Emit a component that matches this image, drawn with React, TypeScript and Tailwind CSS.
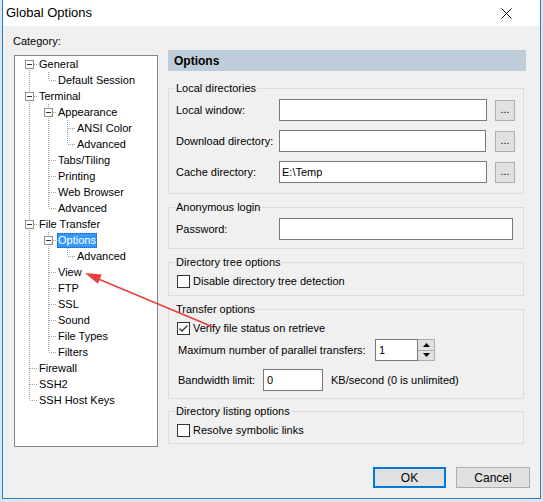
import React from 'react';

type Node = { label: string; level: number; box?: boolean; selected?: boolean };

const tree: Node[] = [
  { label: 'General', level: 0, box: true },
  { label: 'Default Session', level: 1 },
  { label: 'Terminal', level: 0, box: true },
  { label: 'Appearance', level: 1, box: true },
  { label: 'ANSI Color', level: 2 },
  { label: 'Advanced', level: 2 },
  { label: 'Tabs/Tiling', level: 1 },
  { label: 'Printing', level: 1 },
  { label: 'Web Browser', level: 1 },
  { label: 'Advanced', level: 1 },
  { label: 'File Transfer', level: 0, box: true },
  { label: 'Options', level: 1, box: true, selected: true },
  { label: 'Advanced', level: 2 },
  { label: 'View', level: 1 },
  { label: 'FTP', level: 1 },
  { label: 'SSL', level: 1 },
  { label: 'Sound', level: 1 },
  { label: 'File Types', level: 1 },
  { label: 'Filters', level: 1 },
  { label: 'Firewall', level: 0 },
  { label: 'SSH2', level: 0 },
  { label: 'SSH Host Keys', level: 0 },
];

// does a sibling at level k follow row i
function continues(i: number, k: number) {
  for (let j = i + 1; j < tree.length; j++) {
    if (tree[j].level <= k) return tree[j].level === k;
  }
  return false;
}

const dot = { stroke: '#a0a0a0', strokeWidth: 1, strokeDasharray: '1 1', shapeRendering: 'crispEdges' as const };

function Cell({ i, k }: { i: number; k: number }) {
  const node = tree[i];
  const own = k === node.level;
  const down = continues(i, k);
  return (
    <svg width="19" height="16" className="shrink-0">
      {!own && down && <line x1="10.5" y1="0" x2="10.5" y2="16" {...dot} />}
      {own && i > 0 && <line x1="10.5" y1="0" x2="10.5" y2="8" {...dot} />}
      {own && down && <line x1="10.5" y1="8" x2="10.5" y2="16" {...dot} />}
      {own && <line x1={node.box ? 15 : 11} y1="8.5" x2="19" y2="8.5" {...dot} />}
      {own && node.box && (
        <g shapeRendering="crispEdges">
          <rect x="6.5" y="4.5" width="8" height="8" fill="#fff" stroke="#919191" />
          <line x1="8" y1="8.5" x2="13" y2="8.5" stroke="#333" />
        </g>
      )}
    </svg>
  );
}

function Tree() {
  return (
    <div className="mt-[6px] h-[392px] w-[144px] border border-[#828790] bg-white pl-[4px] pt-0">
      {tree.map((node, i) => (
        <div key={i} className="flex h-[16px] items-center">
          {Array.from({ length: node.level + 1 }, (_, k) => (
            <Cell key={k} i={i} k={k} />
          ))}
          <span
            className={
              node.selected
                ? 'h-[15px] border border-dotted border-[#1d5ea3] bg-[#3399ff] px-[0px] leading-[13px] text-white'
                : 'h-[15px] px-[1px] leading-[15px] text-black'
            }
          >
            {node.label}
          </span>
        </div>
      ))}
    </div>
  );
}

function Input({ w, value = '', pad = 'pl-[2px]' }: { w: string; value?: string; pad?: string }) {
  return (
    <div className={`h-[22px] ${w} shrink-0 border border-[#7a7a7a] bg-white ${pad} leading-[20px]`}>{value}</div>
  );
}

function Browse() {
  return (
    <div className="ml-[8px] flex h-[21px] w-[20px] shrink-0 items-center justify-center border border-[#adadad] bg-[#e1e1e1] pb-[2px] text-[11px] leading-none">
      ...
    </div>
  );
}

function Check({ checked }: { checked?: boolean }) {
  return (
    <div className="flex h-[13px] w-[13px] shrink-0 items-center justify-center border border-[#333] bg-white">
      {checked && (
        <svg width="11" height="11" viewBox="0 0 11 11">
          <path d="M1.5 5.5 L4 8 L9.5 2.5" fill="none" stroke="#333" strokeWidth="1.3" />
        </svg>
      )}
    </div>
  );
}

function Group({ title, className, children }: { title: string; className: string; children: React.ReactNode }) {
  return (
    <fieldset className={`w-[356px] border border-[#dcdcdc] pl-[6px] ${className}`}>
      <legend className="px-[1px] leading-[14px]">{title}</legend>
      {children}
    </fieldset>
  );
}

export default function App() {
  return (
    <div className="flex h-[502px] w-[543px] bg-[#e4e4e4] font-['Liberation_Sans',Arial,sans-serif] text-[11px] text-black">
      <div className="ml-[2px] flex h-[499px] w-[539px] flex-col border-x border-b border-[#1883d7]">
        <div className="flex h-[26px] shrink-0 items-center bg-white pl-[3px]">
          <span className="text-[13px]">Global Options</span>
          <svg width="11" height="11" viewBox="0 0 11 11" className="ml-auto mr-[28px]">
            <path d="M0.5 0.5 L10.5 10.5 M10.5 0.5 L0.5 10.5" stroke="#111" strokeWidth="1" />
          </svg>
        </div>

        <div className="flex flex-1 flex-col bg-[#f0f0f0]">
          <div className="flex pl-[11px]">
            <div className="w-[144px]">
              <div className="-ml-[1px] mt-[7px] h-[16px] leading-[16px]">Category:</div>
              <Tree />
            </div>

            <div className="ml-[10px] mt-[24px]">
              <div className="flex h-[21px] w-[358px] items-center bg-[#bfcddb] pl-[6px] text-[12px] font-bold">
                Options
              </div>

              <Group title="Local directories" className="mt-[10px] pb-[10px] pt-[4px]">
                <div className="flex flex-col gap-[9px] pl-[1px]">
                  <div className="flex h-[22px] items-center">
                    <span className="w-[103px]">Local window:</span>
                    <Input w="w-[208px]" />
                    <Browse />
                  </div>
                  <div className="flex h-[22px] items-center">
                    <span className="w-[103px]">Download directory:</span>
                    <Input w="w-[207px]" />
                    <div className="ml-[1px]" />
                    <Browse />
                  </div>
                  <div className="flex h-[22px] items-center">
                    <span className="w-[103px]">Cache directory:</span>
                    <Input w="w-[208px]" value={'E:\\Temp'} />
                    <Browse />
                  </div>
                </div>
              </Group>

              <Group title="Anonymous login" className="mt-[6px] pb-[8px] pt-[4px]">
                <div className="flex h-[22px] items-center pl-[1px]">
                  <span className="w-[103px]">Password:</span>
                  <Input w="w-[234px]" />
                </div>
              </Group>

              <Group title="Directory tree options" className="mt-[6px] pb-[7px] pt-[6px]">
                <div className="ml-[2px] flex h-[13px] items-center gap-[3px]">
                  <Check />
                  <span>Disable directory tree detection</span>
                </div>
              </Group>

              <Group title="Transfer options" className="mt-[6px] pb-[7px] pt-[6px]">
                <div className="ml-[2px] flex h-[13px] items-center gap-[3px]">
                  <Check checked />
                  <span>Verify file status on retrieve</span>
                </div>
                <div className="ml-[3px] mt-[4px] flex h-[22px] items-center">
                  <span className="w-[197px]">Maximum number of parallel transfers:</span>
                  <Input w="w-[43px]" value="1" pad="pl-[3px]" />
                  <div className="flex h-[22px] w-[17px] flex-col border border-l-0 border-[#adadad]">
                    <div className="flex flex-1 items-center justify-center border-b border-[#adadad] bg-[#e1e1e1]">
                      <svg width="7" height="4" viewBox="0 0 7 4">
                        <path d="M0 4 L3.5 0 L7 4 Z" fill="#000" />
                      </svg>
                    </div>
                    <div className="flex flex-1 items-center justify-center bg-[#e1e1e1]">
                      <svg width="7" height="4" viewBox="0 0 7 4">
                        <path d="M0 0 L3.5 4 L7 0 Z" fill="#000" />
                      </svg>
                    </div>
                  </div>
                </div>
                <div className="ml-[3px] mt-[8px] flex h-[22px] items-center">
                  <span className="w-[85px]">Bandwidth limit:</span>
                  <Input w="w-[60px]" value="0" pad="pl-[3px]" />
                  <span className="ml-[8px]">KB/second (0 is unlimited)</span>
                </div>
              </Group>

              <Group title="Directory listing options" className="mt-[5px] pb-[6px] pt-[6px]">
                <div className="ml-[2px] flex h-[13px] items-center gap-[3px]">
                  <Check />
                  <span>Resolve symbolic links</span>
                </div>
              </Group>
            </div>
          </div>

          <div className="mt-auto flex justify-end gap-[10px] pb-[10px] pr-[10px] text-[12px]">
            <button className="flex h-[21px] w-[73px] items-center justify-center border-2 border-[#0078d7] bg-[#e1e1e1]">
              OK
            </button>
            <button className="flex h-[21px] w-[74px] items-center justify-center border border-[#adadad] bg-[#e1e1e1]">
              Cancel
            </button>
          </div>
        </div>
      </div>

      <svg width="543" height="502" className="pointer-events-none absolute left-0 top-0">
        <line x1="213" y1="327" x2="96" y2="278" stroke="#e8413a" strokeWidth="1.6" />
        <polygon points="85,273 101.7,274.6 97.9,283.8" fill="#e8413a" />
      </svg>
    </div>
  );
}
